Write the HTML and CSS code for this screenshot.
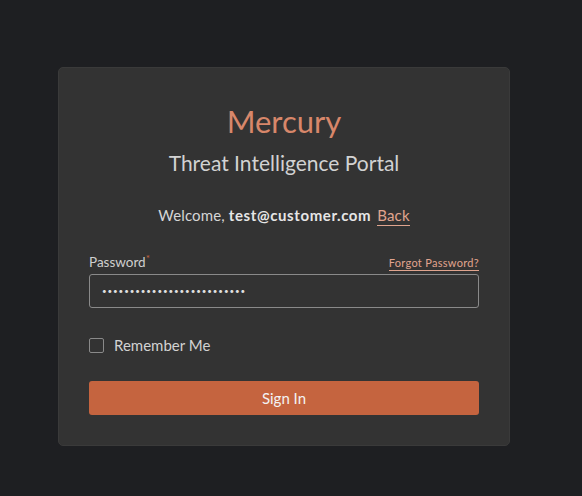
FILE: index.html
```html
<!DOCTYPE html>
<html>
<head>
<meta charset="utf-8">
<link rel="stylesheet" href="styles.css">
</head>
<body>
<main class="page">
  <section class="card">
    <h1 class="brand">Mercury</h1>
    <h2 class="subtitle">Threat Intelligence Portal</h2>
    <p class="welcome">Welcome, <strong>test@customer.com</strong> <a class="link back" href="#">Back</a></p>
    <div class="label-row">
      <label class="label">Password<span class="req">*</span></label>
      <a class="link forgot" href="#">Forgot Password?</a>
    </div>
    <div class="input">••••••••••••••••••••••••••</div>
    <label class="remember"><span class="box"></span>Remember Me</label>
    <button class="btn">Sign In</button>
  </section>
</main>
</body>
</html>
```
FILE: styles.css
```css
html, body {
  margin: 0;
  padding: 0;
  background: #1e1f22;
  font-family: "Lato", "Noto Sans", sans-serif;
}
.page {
  padding: 67px 0 0 58px;
}
.card {
  box-sizing: border-box;
  width: 452px;
  height: 379px;
  background: #333333;
  border: 1px solid #3a3a3a;
  border-radius: 5px;
  padding: 35px 30px 0 30px;
  display: flex;
  flex-direction: column;
}
.brand {
  margin: 0;
  font-weight: 400;
  font-size: 31px;
  line-height: 36px;
  color: #d8876a;
  text-align: center;
}
.subtitle {
  margin: 10px 0 0;
  font-weight: 400;
  font-size: 21px;
  line-height: 28px;
  color: #d2d2d2;
  text-align: center;
}
.welcome {
  margin: 28px 0 0;
  font-size: 15px;
  line-height: 20px;
  color: #d6d6d6;
  text-align: center;
  letter-spacing: 0.15px;
}
.welcome strong {
  font-weight: 700;
  color: #e6e6e6;
  letter-spacing: 0.6px;
}
.link {
  color: #e0a48e;
  text-decoration: none;
  border-bottom: 1px solid #e0a48e;
}
.back {
  padding-bottom: 1px;
  margin-left: 2px;
}
.label-row {
  margin-top: 28px;
  display: flex;
  justify-content: space-between;
  align-items: flex-end;
  height: 18px;
}
.label {
  font-size: 13.5px;
  line-height: 18px;
  color: #cfcfcf;
}
.req {
  color: #c5643f;
  font-size: 10px;
  vertical-align: top;
  line-height: 10px;
}
.forgot {
  font-size: 11px;
  line-height: 14px;
  letter-spacing: 0.3px;
}
.input {
  margin-top: 3px;
  box-sizing: border-box;
  height: 34px;
  border: 1px solid #8a8a8a;
  border-radius: 3px;
  padding: 0 12px;
  font-size: 8px;
  letter-spacing: 0.9px;
  line-height: 32px;
  color: #e0e0e0;
}
.remember {
  margin-top: 27px;
  display: flex;
  align-items: center;
  height: 20px;
  font-size: 15px;
  color: #d2d2d2;
}
.box {
  box-sizing: border-box;
  width: 15px;
  height: 15px;
  border: 1px solid #8a8a8a;
  border-radius: 2px;
  margin-right: 10px;
}
.btn {
  margin-top: 26px;
  height: 34px;
  border: none;
  border-radius: 3px;
  background: #c5643f;
  color: #f3f3f3;
  font-family: inherit;
  font-size: 15px;
  cursor: pointer;
}
```
